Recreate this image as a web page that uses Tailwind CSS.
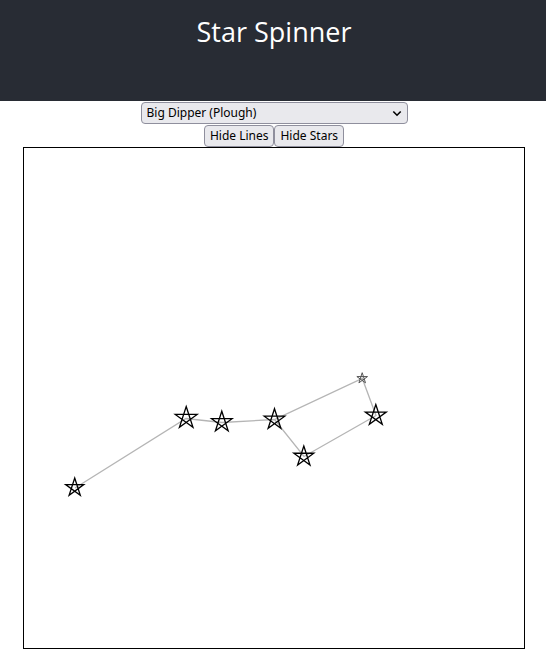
<!DOCTYPE html>
<html lang="en">
<head>
<meta charset="utf-8">
<meta name="viewport" content="width=device-width, initial-scale=1">
<title>Star Spinner</title>
<script src="https://cdn.jsdelivr.net/npm/@tailwindcss/browser@4"></script>
</head>
<body class="bg-white text-black">
<header class="bg-[#282c34] pl-0.5 pt-[11px] pb-12 text-center text-white">
  <h1 class="font-['Open_Sans','Noto_Sans',sans-serif] text-[27px] leading-[42px]">Star Spinner</h1>
</header>
<main class="flex flex-col items-center pl-0.5 pt-px font-['Noto_Sans','Open_Sans',sans-serif] text-[12px]">
  <div class="relative w-[267px] max-w-full">
    <select aria-label="Constellation" class="block h-[22px] w-full appearance-none rounded border border-[#8f8f9d] bg-[#e9e9ed] pl-[5px] pr-6">
      <option>Big Dipper (Plough)</option>
    </select>
    <svg class="pointer-events-none absolute right-1.5 top-2 h-2 w-2.5" viewBox="0 0 10 8" fill="none" stroke="#000" stroke-width="1.6" aria-hidden="true"><path d="M1.300 1.500 5 5.200l3.700-3.700"/></svg>
  </div>
  <div class="mt-px flex leading-5">
    <button type="button" class="h-[22px] rounded border border-[#8f8f9d] bg-[#e9e9ed] px-[5px]">Hide Lines</button>
    <button type="button" class="h-[22px] rounded border border-[#8f8f9d] bg-[#e9e9ed] px-[5px]">Hide Stars</button>
  </div>
  <div class="w-full max-w-[502px] border border-black">
    <svg class="block w-full" viewBox="0 0 500 500" fill="none" role="img" aria-label="Big Dipper constellation">
      <defs>
        <path id="star" vector-effect="non-scaling-stroke" stroke-linejoin="miter" d="M0-1 .588.809-.951-.309H.951L-.588.809Z"/>
      </defs>
      <path stroke="#b5b5b5" stroke-width="1.3" d="M51 340 162 270.500 198 274.500 250.500 271.500 338.300 230.500 352 267.500 280 308.500 250.500 271.500"/>
      <g stroke="#000" stroke-width="1.3">
        <use href="#star" transform="translate(50.700 339.500) scale(9.500)"/>
        <use href="#star" transform="translate(162.200 270) scale(11.500)"/>
        <use href="#star" transform="translate(197.800 274) scale(10.800)"/>
        <use href="#star" transform="translate(250.500 271.500) scale(10.800)"/>
        <use href="#star" transform="translate(351.800 267.500) scale(11)"/>
        <use href="#star" transform="translate(279.800 308.500) scale(10.500)"/>
      </g>
      <use href="#star" stroke="#555" stroke-width="1" transform="translate(338.200 230.300) scale(5.600)"/>
    </svg>
  </div>
</main>
</body>
</html>
